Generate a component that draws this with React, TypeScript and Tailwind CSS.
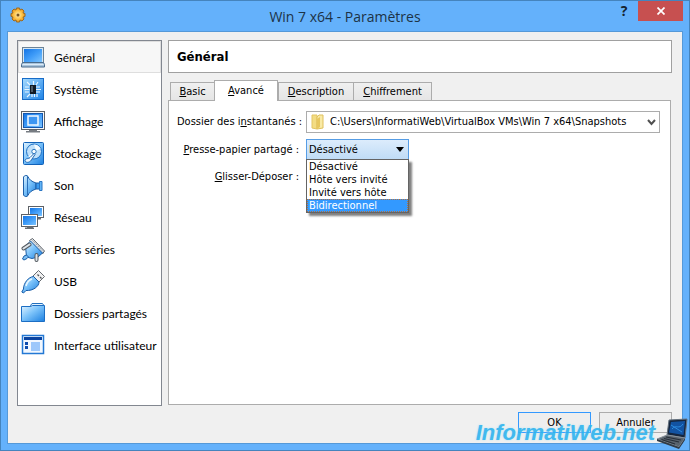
import { useState, type ReactNode } from "react";

const uiFont = "font-['DejaVu_Sans_Condensed','DejaVu_Sans',sans-serif]";
const titleFont = "font-['Open_Sans','Noto_Sans',sans-serif]";
const navFont = "font-['Lato','Open_Sans',sans-serif]";

function Gradients() {
  return (
    <svg className="absolute size-0" aria-hidden="true">
      <defs>
        <linearGradient id="screen" x1="0" y1="0" x2="1" y2="1">
          <stop offset="0" stopColor="#1474e4" />
          <stop offset="0.5" stopColor="#3f9cf8" />
          <stop offset="1" stopColor="#7cc4ff" />
        </linearGradient>
        <linearGradient id="sky" x1="0" y1="0" x2="1" y2="1">
          <stop offset="0" stopColor="#e2f4ff" />
          <stop offset="0.45" stopColor="#7cc3fa" />
          <stop offset="1" stopColor="#1b7fe0" />
        </linearGradient>
        <linearGradient id="tile" x1="0" y1="0" x2="1" y2="1">
          <stop offset="0" stopColor="#a8dcff" />
          <stop offset="1" stopColor="#1d82e6" />
        </linearGradient>
        <radialGradient id="gold">
          <stop offset="0" stopColor="#fff0b8" />
          <stop offset="0.6" stopColor="#fcc244" />
          <stop offset="1" stopColor="#e59520" />
        </radialGradient>
      </defs>
    </svg>
  );
}

function NavIcon({ children }: { children: ReactNode }) {
  return (
    <svg width="24" height="24" viewBox="0 0 24 24" className="shrink-0" aria-hidden="true">
      {children}
    </svg>
  );
}

const icons = {
  general: (
    <NavIcon>
      <rect x="1.5" y="1.5" width="21" height="15" fill="#d7e6f2" stroke="#6b8296" />
      <rect x="3" y="3" width="18" height="13" fill="url(#screen)" />
      <path d="M1.5 16.5h21l1 2v2.500h-23v-2.500z" fill="#a9c4dc" stroke="#4b6c8c" />
      <path d="M1.5 18.500h21" stroke="#dcebf7" />
    </NavIcon>
  ),
  system: (
    <NavIcon>
      <rect x="1.5" y="0.5" width="21" height="21" fill="url(#tile)" stroke="#176cc8" />
      <path d="M4 9h4M3.500 11.500h5M4 14h4M15 9h4M15 11.500h5M15 14h4M12.500 3v4M17 4l-2 3M6 19l3-3M11 16v3M13.500 16v3M16 16v3M6 4l3 3" stroke="#e9f6ff" strokeWidth="1.200" />
      <rect x="9" y="7" width="6" height="9" fill="#111a24" />
      <path d="M10 8h2v6h-2z" fill="#4d5a66" />
    </NavIcon>
  ),
  display: (
    <NavIcon>
      <rect x="0.500" y="1.500" width="23" height="18" fill="#f5f6f7" stroke="#5d6166" />
      <rect x="2.500" y="3.500" width="19" height="14" fill="url(#screen)" stroke="#1457ae" />
      <rect x="7" y="6" width="10" height="9" fill="#3d96f2" stroke="#f4faff" strokeWidth="1.500" />
      <path d="M8 20h8v1h3v1.500H5V21h3z" fill="#777c82" />
    </NavIcon>
  ),
  storage: (
    <NavIcon>
      <rect x="2.500" y="0.500" width="20" height="22" rx="1" fill="url(#sky)" stroke="#1262b8" />
      <circle cx="13" cy="9.500" r="7.500" fill="#bfe0fa" stroke="#1e70c4" />
      <path d="M13 2.500a7.500 7.500 0 0 1 6.500 4L15 9zM7 14.500l4-3 1 4.500a6 6 0 0 1-5-1.500z" fill="#f4fbff" />
      <circle cx="13" cy="9.500" r="2.200" fill="#f7fcff" stroke="#2c77bf" />
      <path d="M4 18.500c1-3 3.500-1 5-3l4-4 1 1-3 4.500c-1 3-6 5-7 1.500z" fill="#eef8ff" stroke="#2269b4" />
    </NavIcon>
  ),
  sound: (
    <NavIcon>
      <path d="M2.500 3C3.500 1 6 1 7 2.500c1 3 3.500 5 8 6.500v6c-4.500 1.500-7 3.500-8 6.500-1 1.500-3.500 1.500-4.500-.500z" fill="url(#sky)" stroke="#1d5fa8" />
      <path d="M6.500 2v20" stroke="#2c6fb8" />
      <path d="M15 9h3.500v6H15z" fill="#3b9bf0" stroke="#1d5fa8" />
      <path d="M18.500 7.500H21v9h-2.500z" fill="#63b5f7" stroke="#2a76c4" />
    </NavIcon>
  ),
  network: (
    <NavIcon>
      <rect x="7.500" y="0.500" width="15" height="11" fill="#fff" stroke="#5d6166" />
      <rect x="9" y="2" width="12" height="8" fill="url(#screen)" />
      <path d="M16 12h4v1.500h-4z" fill="#6a6f75" />
      <rect x="0.500" y="8.500" width="16" height="12" fill="#fff" stroke="#5d6166" />
      <rect x="2" y="10" width="13" height="9" fill="url(#screen)" />
      <path d="M6 20.500h6v1h1V23H4v-1.500h2z" fill="#6a6f75" />
    </NavIcon>
  ),
  serial: (
    <NavIcon>
      <path d="M8.500 2.500l3-2 12 12.500-2 3z" fill="#e4e7ea" stroke="#5b6066" />
      <path d="M11.500 2.500l10.500 11" stroke="#8b9299" strokeDasharray="1.500 1" />
      <path d="M4.500 8l5-5 12 12-4.500 4-6 1.500L5.500 19z" fill="url(#sky)" stroke="#1b5fa8" />
      <path d="M2.500 10.500l6-4M15.500 22v-5" stroke="#555b61" strokeWidth="4" strokeLinecap="round" />
      <path d="M2.500 10.500l6-4M15.500 22v-5" stroke="#dfe5ea" strokeWidth="2" strokeLinecap="round" />
      <path d="M5.500 17L3 18l-1.500 3 1.500 1 3-1.500L7.500 19z" fill="#7cc0f5" stroke="#1b5fa8" />
    </NavIcon>
  ),
  usb: (
    <NavIcon>
      <path d="M12 6l5.500-5.500 6 6L18 12z" fill="#f1f1f1" stroke="#666b70" />
      <path d="M16.500 4.500l1.500 1.500M19 7l1.500 1.500" stroke="#505459" strokeWidth="1.300" />
      <path d="M12.500 6.500l5.500 5.500c0 4.500-6 9-13 8.500L2.500 23 .8 22 2.500 19C2.500 13 7.500 7 12.500 6.500z" fill="url(#sky)" stroke="#155ba8" />
      <path d="M5 16c1-4 3-6 6-7" stroke="#e8f7ff" strokeWidth="1.500" fill="none" />
    </NavIcon>
  ),
  folder: (
    <NavIcon>
      <path d="M9.500 6V3.500l1.500-2h10.500l1 1.500v5z" fill="#e2f3ff" stroke="#2370bd" />
      <path d="M.5 4.500h9l2-1h12v16H.5z" fill="url(#sky)" stroke="#1c6ec4" />
    </NavIcon>
  ),
  interface: (
    <NavIcon>
      <rect x="1.500" y="1.500" width="21" height="18" fill="#f2f8ff" stroke="#2378d4" strokeWidth="1.500" />
      <rect x="3" y="3" width="18" height="3" fill="#0a43a0" />
      <rect x="4" y="8" width="3" height="3" fill="#0d4cae" />
      <rect x="4" y="12" width="3" height="3" fill="#0d4cae" />
      <rect x="10" y="8" width="9" height="9" fill="#9dc8fb" />
    </NavIcon>
  ),
};

const sections = [
  { label: "Général", icon: icons.general },
  { label: "Système", icon: icons.system },
  { label: "Affichage", icon: icons.display },
  { label: "Stockage", icon: icons.storage },
  { label: "Son", icon: icons.sound },
  { label: "Réseau", icon: icons.network },
  { label: "Ports séries", icon: icons.serial },
  { label: "USB", icon: icons.usb },
  { label: "Dossiers partagés", icon: icons.folder },
  { label: "Interface utilisateur", icon: icons.interface },
];

const tabs = [
  { key: "B", rest: "asic", width: "w-[45px]" },
  { key: "A", rest: "vancé", width: "w-[64px]" },
  { key: "D", rest: "escription", width: "w-[76px]" },
  { key: "C", rest: "hiffrement", width: "w-[79px]" },
];

const modes = ["Désactivé", "Hôte vers invité", "Invité vers hôte", "Bidirectionnel"];

function TitleBar() {
  return (
    <header className="relative flex h-[30px] items-center justify-center">
      <svg width="16" height="16" viewBox="0 0 16 16" className="absolute top-[6px] left-[9px]" aria-hidden="true">
        <path
          d="M6.500 1h3l.5 2 2-1 2 2-1 2 2 .5v3l-2 .5 1 2-2 2-2-1-.5 2h-3L6 13l-2 1-2-2 1-2-2-.5v-3L3 6 2 4l2-2 2 1z"
          fill="url(#gold)"
          stroke="#a06a1c"
        />
        <circle cx="8" cy="8" r="1.500" fill="#7a5520" />
      </svg>
      <h1 className={`${titleFont} text-[14px] text-[#1d3346]`}>Win 7 x64 - Paramètres</h1>
      <div className="absolute top-0 right-[6px] flex">
        <button type="button" aria-label="Aide" className={`${titleFont} h-[20px] w-[28px] text-[14px] leading-[20px] font-bold text-[#16232e]`}>
          ?
        </button>
        <button type="button" aria-label="Fermer" className="flex h-[20px] w-[45px] items-center justify-center bg-[#c75050]">
          <svg width="8" height="8" viewBox="0 0 8 8" aria-hidden="true">
            <path d="M.5.500l7 7M7.500.500l-7 7" stroke="#fff" strokeWidth="1.700" />
          </svg>
        </button>
      </div>
    </header>
  );
}

function Watermark() {
  return (
    <div className="pointer-events-none absolute right-0 bottom-0 flex items-end">
      <span className="mb-[2px] font-['Liberation_Sans',Arial,sans-serif] text-[22px] leading-[30px] font-bold text-[#2fb4ee] italic opacity-90 [text-shadow:0_0_2px_#a5e2fb]">
        InformatiWeb.net
      </span>
      <svg width="34" height="32" viewBox="0 0 34 32" aria-hidden="true">
        <path d="M14 2l18-1-2 19-18-3z" fill="#15263e" stroke="#64717e" />
        <path d="M16 4l14-1-1.500 14L14 14.500z" fill="#1253a2" />
        <path d="M17 11c4-5 7 1 11-5M16 7l11 7" stroke="#2c8ce0" fill="none" />
        <path d="M12 17l18 3-6 9L2 21z" fill="#59636d" stroke="#88929b" />
        <path d="M11 19l15 3M9 20.500l15 3.500M6.500 21.500L20 26" stroke="#262e38" strokeWidth="1.200" />
        <path d="M2 21v2l22 8 6-9v-2l-6 9z" fill="#323b45" />
      </svg>
    </div>
  );
}

export default function App() {
  const [section, setSection] = useState("Général");
  const [tab, setTab] = useState("A");
  const [mode, setMode] = useState("Désactivé");

  return (
    <div className={`${uiFont} relative flex min-h-screen flex-col border border-[#4584bd] bg-[#64b1fb] px-[6px] pb-[6px] text-[11px] text-black`}>
      <Gradients />
      <div className="-mx-[6px]">
        <TitleBar />
      </div>
      <main className="flex flex-1 flex-col gap-[6px] border border-[#5599d8] bg-[#f0f0f0] pt-[8px] pr-[10px] pb-[10px] pl-[9px]">
        <div className="flex flex-1 gap-[6px]">
          <nav className={`${navFont} w-[145px] shrink-0 border border-[#828790] bg-white`}>
            {sections.map(({ label, icon }) => (
              <button
                key={label}
                type="button"
                onClick={() => setSection(label)}
                className={`flex h-[32px] w-full items-center gap-[9px] border pt-[2px] pl-[2px] text-left text-[12px] whitespace-nowrap ${
                  section === label ? "border-[#dedede] bg-[#f7f7f7]" : "border-transparent"
                }`}
              >
                {icon}
                {label}
              </button>
            ))}
          </nav>
          <section className="flex min-w-0 flex-1 flex-col">
            <h2 className="flex h-[33px] items-center border border-[#a0a0a0] bg-white px-[8px] text-[13px] font-bold">Général</h2>
            <div role="tablist" className="mt-[7px] flex items-end pl-[2px]">
              {tabs.map(({ key, rest, width }) => (
                <button
                  key={key}
                  type="button"
                  role="tab"
                  aria-selected={tab === key}
                  onClick={() => setTab(key)}
                  className={`${width} border border-b-0 border-[#acacac] pt-px text-center ${
                    tab === key ? "relative -mb-px h-[21px] bg-white" : "-mr-px h-[18px] bg-linear-to-b from-[#f0f0f0] to-[#e5e5e5]"
                  }`}
                >
                  <u>{key}</u>
                  {rest}
                </button>
              ))}
            </div>
            <div role="tabpanel" className="mr-px mb-px flex-1 border border-[#acacac] bg-white pt-[10px] pr-[10px] pl-[8px]">
              <div className="grid grid-cols-[122px_1fr] items-center gap-x-[7px] gap-y-[6px]">
                <label htmlFor="snapshots" className="pt-px text-right whitespace-nowrap">
                  Dossier des i<u>n</u>stantanés :
                </label>
                <div className="relative">
                  <select id="snapshots" className="block h-[22px] w-full appearance-none border border-[#acacac] bg-white pt-px pl-[23px]">
                    <option>C:\Users\InformatiWeb\VirtualBox VMs\Win 7 x64\Snapshots</option>
                  </select>
                  <svg width="14" height="16" viewBox="0 0 14 16" className="pointer-events-none absolute top-[3px] left-[5px]" aria-hidden="true">
                    <path d="M1 1h5v14l-5-1z" fill="#f3dc83" stroke="#e3c564" />
                    <path d="M6 3l2-2h4v13l-6 1z" fill="#f9eaa6" stroke="#dfc05c" />
                    <path d="M9 3v10l-3 2V5z" fill="#e7c75f" />
                  </svg>
                  <svg width="9" height="7" viewBox="0 0 9 7" className="pointer-events-none absolute top-[8px] right-[4px]" aria-hidden="true">
                    <path d="M1 1l3.500 4L8 1" stroke="#505050" strokeWidth="2" fill="none" />
                  </svg>
                </div>

                <label htmlFor="clipboard" className="pt-px text-right whitespace-nowrap">
                  <u>P</u>resse-papier partagé :
                </label>
                <div className="relative w-[103px]">
                  <select
                    id="clipboard"
                    value={mode}
                    onChange={(e) => setMode(e.target.value)}
                    className="block h-[21px] w-full appearance-none border border-[#569de5] bg-linear-to-b from-[#dcecfc] to-[#c0dcf6] pt-px pl-[2px]"
                  >
                    {modes.map((m) => (
                      <option key={m}>{m}</option>
                    ))}
                  </select>
                  <svg width="8" height="5" viewBox="0 0 8 5" className="pointer-events-none absolute top-[8px] right-[5px]" aria-hidden="true">
                    <path d="M0 0h8L4 5z" fill="#000" />
                  </svg>
                  <ul
                    role="listbox"
                    aria-label="Presse-papier partagé"
                    className="absolute top-[20px] left-0 z-10 w-full border border-[#646464] bg-white shadow-[3px_3px_2px_#00000080]"
                  >
                    {modes.map((m) => (
                      <li
                        key={m}
                        role="option"
                        aria-selected={m === mode}
                        onClick={() => setMode(m)}
                        className={`h-[13px] pl-[2px] leading-[13px] whitespace-nowrap ${
                          m === "Bidirectionnel" ? "bg-[#3399ff] text-white outline-1 -outline-offset-1 outline-[#b5703c] outline-dotted" : ""
                        }`}
                      >
                        {m}
                      </li>
                    ))}
                  </ul>
                </div>

                <label htmlFor="dragdrop" className="pt-px text-right whitespace-nowrap">
                  <u>G</u>lisser-Déposer :
                </label>
                <select id="dragdrop" className="h-[21px] w-[103px] appearance-none border border-[#acacac] bg-[#f0f0f0] pl-[2px]">
                  <option>Désactivé</option>
                </select>
              </div>
            </div>
          </section>
        </div>
        <footer className="flex justify-end gap-[8px]">
          <button type="button" className="h-[21px] w-[73px] border border-[#3399ff] bg-[#eeeeee] pt-px">
            OK
          </button>
          <button type="button" className="h-[21px] w-[73px] border border-[#acacac] bg-[#eeeeee] pt-px">
            Annuler
          </button>
        </footer>
      </main>
      <Watermark />
    </div>
  );
}
